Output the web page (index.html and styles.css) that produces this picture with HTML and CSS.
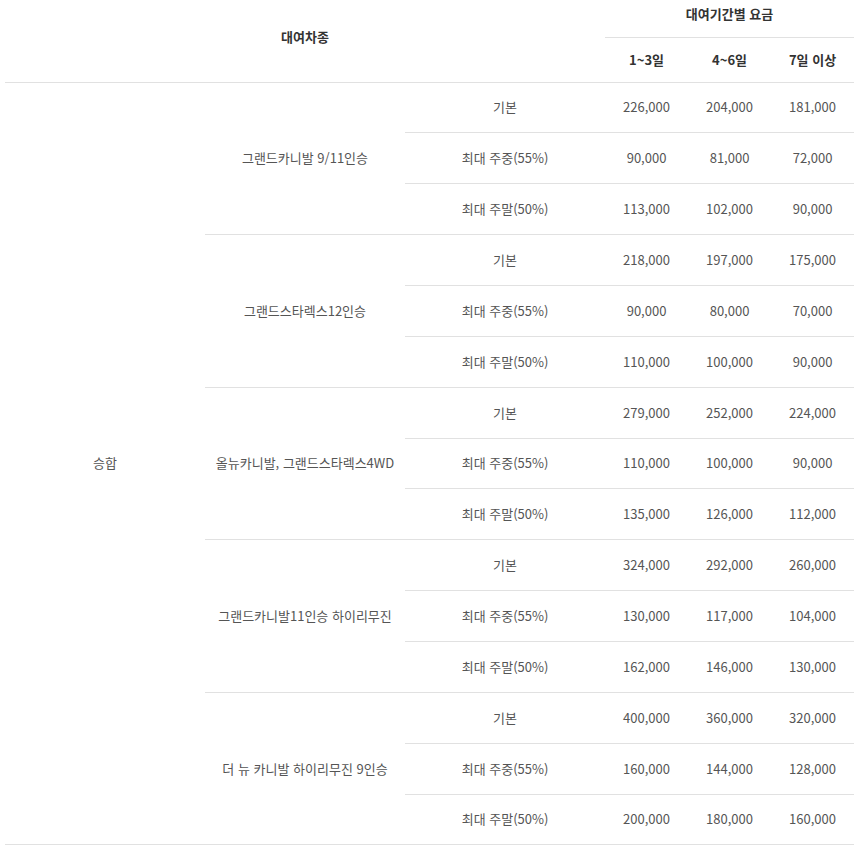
FILE: index.html
```html
<!DOCTYPE html>
<html lang="ko">
<head>
<meta charset="utf-8">
<link rel="stylesheet" href="styles.css">
</head>
<body>
<table class="rate">
  <colgroup>
    <col class="c-wide"><col class="c-wide"><col class="c-wide">
    <col class="c-num"><col class="c-num"><col class="c-num">
  </colgroup>
  <thead>
    <tr class="h1">
      <th colspan="3" rowspan="2" class="th-main">대여차종</th>
      <th colspan="3" class="th-top">대여기간별 요금</th>
    </tr>
    <tr class="h2">
      <th>1~3일</th><th>4~6일</th><th>7일 이상</th>
    </tr>
  </thead>
  <tbody>
    <tr>
      <td rowspan="15">승합</td>
      <td rowspan="3">그랜드카니발 9/11인승</td>
      <td>기본</td><td>226,000</td><td>204,000</td><td>181,000</td>
    </tr>
    <tr><td>최대 주중(55%)</td><td>90,000</td><td>81,000</td><td>72,000</td></tr>
    <tr><td>최대 주말(50%)</td><td>113,000</td><td>102,000</td><td>90,000</td></tr>
    <tr>
      <td rowspan="3">그랜드스타렉스12인승</td>
      <td>기본</td><td>218,000</td><td>197,000</td><td>175,000</td>
    </tr>
    <tr><td>최대 주중(55%)</td><td>90,000</td><td>80,000</td><td>70,000</td></tr>
    <tr><td>최대 주말(50%)</td><td>110,000</td><td>100,000</td><td>90,000</td></tr>
    <tr>
      <td rowspan="3">올뉴카니발, 그랜드스타렉스4WD</td>
      <td>기본</td><td>279,000</td><td>252,000</td><td>224,000</td>
    </tr>
    <tr><td>최대 주중(55%)</td><td>110,000</td><td>100,000</td><td>90,000</td></tr>
    <tr><td>최대 주말(50%)</td><td>135,000</td><td>126,000</td><td>112,000</td></tr>
    <tr>
      <td rowspan="3">그랜드카니발11인승 하이리무진</td>
      <td>기본</td><td>324,000</td><td>292,000</td><td>260,000</td>
    </tr>
    <tr><td>최대 주중(55%)</td><td>130,000</td><td>117,000</td><td>104,000</td></tr>
    <tr><td>최대 주말(50%)</td><td>162,000</td><td>146,000</td><td>130,000</td></tr>
    <tr>
      <td rowspan="3">더 뉴 카니발 하이리무진 9인승</td>
      <td>기본</td><td>400,000</td><td>360,000</td><td>320,000</td>
    </tr>
    <tr><td>최대 주중(55%)</td><td>160,000</td><td>144,000</td><td>128,000</td></tr>
    <tr><td>최대 주말(50%)</td><td>200,000</td><td>180,000</td><td>160,000</td></tr>
  </tbody>
</table>
</body>
</html>
```
FILE: styles.css
```css
html, body {
  margin: 0;
  padding: 0;
  background: #fff;
}
body {
  font-family: "Noto Sans CJK KR", "Noto Sans", sans-serif;
  font-size: 13px;
  color: #555;
}
.rate {
  margin: -8px 0 0 5px;
  width: 849px;
  border-collapse: collapse;
  table-layout: fixed;
}
.c-wide { width: 200px; }
.c-num { width: 83px; }
.rate th,
.rate td {
  padding: 0;
  text-align: center;
  vertical-align: middle;
  border-bottom: 1px solid #e1e1e1;
  line-height: 18px;
}
.rate th {
  font-weight: bold;
  color: #333;
}
.rate thead tr { height: 45px; }
.rate tbody tr { height: 50.87px; }
```
